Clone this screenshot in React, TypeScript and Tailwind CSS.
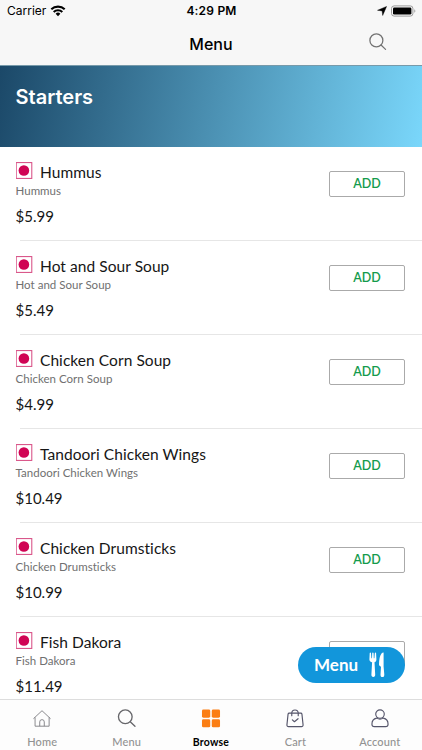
import clsx from "clsx";
import type { ReactNode } from "react";

const items = [
  { name: "Hummus", price: "$5.99" },
  { name: "Hot and Sour Soup", price: "$5.49" },
  { name: "Chicken Corn Soup", price: "$4.99" },
  { name: "Tandoori Chicken Wings", price: "$10.49" },
  { name: "Chicken Drumsticks", price: "$10.99" },
  { name: "Fish Dakora", price: "$11.49" },
];

function SearchIcon({ className }: { className?: string }) {
  return (
    <svg viewBox="0 0 20 20" fill="none" stroke="currentColor" strokeWidth="1.4" className={className}>
      <circle cx="8.2" cy="8.2" r="7.2" />
      <path d="M13.4 13.4 18.4 18.2" strokeLinecap="round" />
    </svg>
  );
}

function HomeIcon() {
  return (
    <svg viewBox="0 0 20 20" fill="none" stroke="#77777b" strokeWidth="0.9" className="size-5">
      <path d="M1 10.2 10 1.8l9 8.4M2.7 8.8v9.3h14.8V8.8M7.6 18v-4.4a2.4 2.4 0 0 1 4.8 0V18" strokeLinejoin="round" />
    </svg>
  );
}

function BrowseIcon() {
  return (
    <svg viewBox="0 0 20 20" fill="#fb7e14" className="size-5">
      <rect x="0.5" y="0.6" width="8.7" height="8.5" rx="1.5" />
      <rect x="10.8" y="0.6" width="8.7" height="8.5" rx="1.5" />
      <rect x="0.5" y="10.8" width="8.7" height="8.5" rx="1.5" />
      <rect x="10.8" y="10.8" width="8.7" height="8.5" rx="1.5" />
    </svg>
  );
}

function CartIcon() {
  return (
    <svg viewBox="0 0 20 20" fill="none" stroke="#55556a" strokeWidth="1.2" strokeLinecap="round" strokeLinejoin="round" className="size-5">
      <path d="M3.9 4.4h12.2c.7 0 1.1.4 1.2 1l1.2 11.3c.1 1.2-.6 1.9-1.7 1.9H3.2c-1.1 0-1.8-.7-1.7-1.9L2.7 5.4c.1-.6.5-1 1.2-1Z" />
      <path d="M6.6 7V4.4a3.4 3.4 0 0 1 6.8 0V7M7.2 11.4l2.2 2 3.8-3.2" />
    </svg>
  );
}

function AccountIcon() {
  return (
    <svg viewBox="0 0 20 20" fill="none" stroke="#55556a" strokeWidth="1.2" className="size-5">
      <ellipse cx="10" cy="5.3" rx="4.5" ry="4.4" />
      <path d="M6.5 9.6C3.3 10.2 1.5 12.4 1.5 16c0 1.7 1 2.6 2.6 2.6h11.8c1.6 0 2.6-.9 2.6-2.6 0-3.6-1.8-5.8-5-6.4-2.1 1.2-4.9 1.2-7 0Z" strokeLinejoin="round" />
    </svg>
  );
}

function CutleryIcon() {
  return (
    <svg viewBox="0 0 16 26" fill="#fff" className="h-[26px] w-4">
      <path d="M.7 1.2c0-.8 1.2-.8 1.3 0l.4 5h.6l.2-5c0-.8 1.3-.8 1.4 0l.2 5h.6l.4-5c.1-.8 1.3-.8 1.3 0l.3 6.2c0 1.5-.7 2.4-1.9 2.9l.7 12.3c.1 1.5-.6 2.4-1.9 2.4s-2-.9-1.9-2.4l.7-12.3C1.5 9.8.4 8.9.4 7.4L.7 1.2Z" />
      <path d="M14.6.8v13.6l.7 8c.1 1.6-.6 2.6-1.9 2.6s-2-1-1.9-2.6l.5-7.6c-1.1-.4-2-1.2-2-2.2.1-5.2.8-9.2 2.7-11.4.7-.8 1.9-1.1 1.9-.4Z" />
    </svg>
  );
}

function StatusBar() {
  return (
    <div className="grid h-[22px] grid-cols-3 items-center pl-[7px] pr-[6px] font-[Inter,sans-serif] text-xs text-black">
      <div className="flex items-center gap-1">
        <span>Carrier</span>
        <svg viewBox="0 0 16 12" className="h-3 w-4">
          <path d="M1.3 4.3a9.6 9.6 0 0 1 13.4 0M3.7 7a6.2 6.2 0 0 1 8.6 0" fill="none" stroke="#000" strokeWidth="2.1" />
          <path d="M8 11.2 5.6 8.8a3.4 3.4 0 0 1 4.8 0L8 11.2Z" />
        </svg>
      </div>
      <span className="text-center font-semibold tracking-[0.2px]">4:29 PM</span>
      <div className="flex items-center justify-end gap-1">
        <svg viewBox="0 0 10 10" className="size-[10px]">
          <path d="M9.6.4 5.7 9.5 5.1 4.9.5 4.3 9.6.4Z" stroke="#000" strokeWidth="0.4" />
        </svg>
        <svg viewBox="0 0 25 12" className="h-3 w-[25px]">
          <rect x="0.5" y="0.9" width="21.4" height="10.2" rx="2.6" fill="none" stroke="#9b9b9b" />
          <rect x="2" y="2.4" width="18.4" height="7.2" rx="1.3" />
          <path d="M23.3 4.2c1.4.6 1.4 3 0 3.6V4.2Z" fill="#9b9b9b" />
        </svg>
      </div>
    </div>
  );
}

function MenuRow({ name, price }: { name: string; price: string }) {
  return (
    <li className="flex h-[94px] flex-col">
      <div className="flex flex-1 items-start justify-between pl-[15.5px] pr-[17px]">
        <div className="pt-[15px]">
          <div className="flex items-start gap-[7.5px]">
            <svg viewBox="0 0 17 17" className="size-[17px]">
              <rect x="0.2" y="0.6" width="15.6" height="15.8" fill="none" stroke="#d6467f" />
              <circle cx="7.9" cy="8.5" r="5.3" fill="#d00454" />
            </svg>
            <h2 className="h-[21px] text-[15.5px] leading-5 tracking-[0.06px] text-[#161616]">{name}</h2>
          </div>
          <p className="text-[11.5px] leading-4 tracking-[0.02px] text-[#707070]">{name}</p>
          <p className="mt-[7px] text-[15px] leading-5 text-[#161616]">{price}</p>
        </div>
        <button className="mt-6 h-[26px] w-[76px] rounded-xs border border-[#aaaaaa] bg-white pt-px text-[12.5px] font-semibold text-[#149b4d]">
          ADD
        </button>
      </div>
      <div className="ml-5 h-px bg-[#e6e6e6]" />
    </li>
  );
}

function Tab({ label, active, children }: { label: string; active?: boolean; children: ReactNode }) {
  return (
    <button className="flex flex-1 flex-col items-center pt-[9px]">
      {children}
      <span
        className={clsx(
          "mt-[6px] leading-4",
          active
            ? "text-[10.5px] font-bold tracking-[0.2px] text-black"
            : "text-[11px] font-medium tracking-[0.15px] text-[#929292]"
        )}
      >
        {label}
      </span>
    </button>
  );
}

export default function App() {
  return (
    <div className="relative flex h-[750px] w-[422px] flex-col overflow-hidden bg-white font-[Lato,sans-serif]">
      <header className="h-[65px] shrink-0 bg-[#f7f7f7]">
        <StatusBar />
        <div className="grid h-[43px] grid-cols-3 items-center">
          <span />
          <h1 className="text-center font-[Inter,sans-serif] text-base font-medium text-black">Menu</h1>
          <SearchIcon className="mr-[35px] mb-[3px] size-[18px] justify-self-end text-[#727272]" />
        </div>
      </header>

      <div className="h-[82px] shrink-0 border-t border-[#779aaa] bg-linear-[101deg] from-[#1b4868] to-[#7ad7fb] pl-[15.5px] pt-[17px]">
        <h2 className="font-[Inter,sans-serif] text-xl leading-7 font-semibold text-white">Starters</h2>
      </div>

      <ul className="min-h-0 flex-1 overflow-hidden">
        {items.map((item) => (
          <MenuRow key={item.name} name={item.name} price={item.price} />
        ))}
      </ul>

      <button className="absolute right-[17px] bottom-[67px] flex h-[36px] w-[107px] items-center justify-between rounded-full bg-[#1296db] pr-[20px] pl-[16px] text-[17px] font-bold text-white">
        Menu
        <CutleryIcon />
      </button>

      <nav className="flex h-[51px] shrink-0 border-t border-[#dddddd] bg-[#fdfdfd]">
        <Tab label="Home">
          <HomeIcon />
        </Tab>
        <Tab label="Menu">
          <SearchIcon className="size-5 text-[#66666a]" />
        </Tab>
        <Tab label="Browse" active>
          <BrowseIcon />
        </Tab>
        <Tab label="Cart">
          <CartIcon />
        </Tab>
        <Tab label="Account">
          <AccountIcon />
        </Tab>
      </nav>
    </div>
  );
}
